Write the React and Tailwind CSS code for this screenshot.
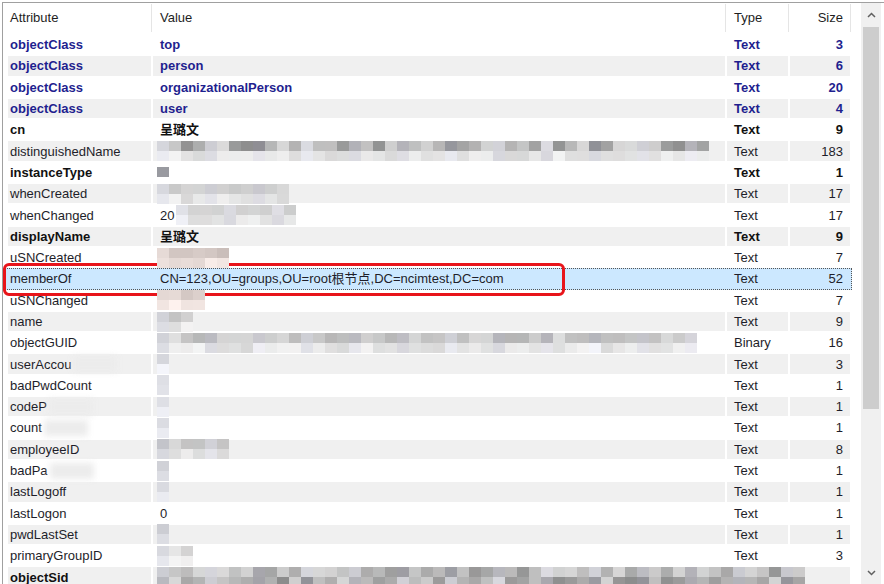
import React from 'react';

const font = { fontFamily: '"Liberation Sans", "Noto Sans CJK SC", Arial, sans-serif' };

// pseudo-random greys for the privacy mosaic
function shade(seed, i, base, spread, tint) {
  const n = Math.abs(Math.sin(seed * 97.13 + i * 12.9898) * 43758.5453) % 1;
  const g = Math.round(base + n * spread);
  const r = Math.min(255, g + (tint === 'pink' ? 12 : (i % 3) - 1));
  const b = Math.min(255, g + (tint === 'pink' ? -4 : (i % 4 === 0 ? 6 : 0)));
  return `rgb(${r},${g},${b})`;
}

const Mosaic = ({ seed, cols, top = 150, topSpread = 70, bottom = 215, bottomSpread = 30, tint, half, after }) => (
  <span className={`relative z-10 inline-flex flex-col shrink-0 ${after ? 'ml-[2px]' : 'ml-[4px]'}`}>
    <span className="flex">
      {Array.from({ length: cols }).map((_, i) => (
        <span key={i} className="block w-[12px] h-[10px]" style={{ background: shade(seed, i, top, topSpread, tint) }} />
      ))}
    </span>
    {!half && (
      <span className="flex">
        {Array.from({ length: cols }).map((_, i) => (
          <span key={i} className="block w-[12px] h-[10px]" style={{ background: shade(seed + 7, i, bottom, bottomSpread, tint) }} />
        ))}
      </span>
    )}
  </span>
);

const rows = [
  { a: 'objectClass', v: 'top', s: '3', kind: 'blue' },
  { a: 'objectClass', v: 'person', s: '6', kind: 'blue' },
  { a: 'objectClass', v: 'organizationalPerson', s: '20', kind: 'blue' },
  { a: 'objectClass', v: 'user', s: '4', kind: 'blue' },
  { a: 'cn', v: '呈璐文', s: '9', kind: 'bold' },
  { a: 'distinguishedName', m: { seed: 1, cols: 46, top: 140, topSpread: 80 }, s: '183' },
  { a: 'instanceType', m: { seed: 2, cols: 1, half: true }, s: '1', kind: 'bold' },
  { a: 'whenCreated', m: { seed: 3, cols: 11, top: 195, topSpread: 25 }, s: '17' },
  { a: 'whenChanged', v: '20', m: { seed: 4, cols: 10, top: 205, topSpread: 25, after: true }, s: '17' },
  { a: 'displayName', v: '呈璐文', s: '9', kind: 'bold' },
  { a: 'uSNCreated', m: { seed: 5, cols: 6, top: 170, topSpread: 50, tint: 'pink' }, s: '7' },
  { a: 'memberOf', v: 'CN=123,OU=groups,OU=root根节点,DC=ncimtest,DC=com', s: '52', selected: true },
  { a: 'uSNChanged', m: { seed: 6, cols: 4, top: 175, topSpread: 45, tint: 'pink' }, s: '7' },
  { a: 'name', m: { seed: 7, cols: 3, top: 185, topSpread: 30 }, s: '9' },
  { a: 'objectGUID', m: { seed: 8, cols: 45, top: 180, topSpread: 45 }, t: 'Binary', s: '16' },
  { a: 'userAccou', cut: true, m: { seed: 9, cols: 1, top: 205, topSpread: 20 }, s: '3' },
  { a: 'badPwdCount', m: { seed: 10, cols: 1, top: 215, topSpread: 15 }, s: '1' },
  { a: 'codeP', cut: true, m: { seed: 11, cols: 1, top: 210, topSpread: 15 }, s: '1' },
  { a: 'count', cut: true, m: { seed: 12, cols: 1, top: 215, topSpread: 15 }, s: '1' },
  { a: 'employeeID', m: { seed: 13, cols: 6, top: 175, topSpread: 45 }, s: '8' },
  { a: 'badPa', cut: true, m: { seed: 14, cols: 1, top: 205, topSpread: 20 }, s: '1' },
  { a: 'lastLogoff', m: { seed: 15, cols: 1, top: 215, topSpread: 15 }, s: '1' },
  { a: 'lastLogon', v: '0', s: '1' },
  { a: 'pwdLastSet', m: { seed: 16, cols: 1, top: 185, topSpread: 20 }, s: '1' },
  { a: 'primaryGroupID', m: { seed: 17, cols: 3, top: 210, topSpread: 20 }, s: '3' },
  { a: 'objectSid', m: { seed: 18, cols: 54, top: 150, topSpread: 70, bottom: 140, bottomSpread: 80 }, s: '', t: '', kind: 'bold' },
];

const Row = ({ r, i }) => {
  const gray = i % 2 === 1 && !r.selected;
  const cell = gray ? 'bg-[#f0f0f0]' : '';
  const text =
    r.kind === 'blue'
      ? 'font-bold text-[#1f1f8f]'
      : r.kind === 'bold'
      ? 'font-bold text-[#111]'
      : 'text-[#1e1e2a]';
  return (
    <div
      className={`flex h-[21.3px] items-stretch text-[13px] leading-none ${
        r.selected ? 'bg-[#cce8ff] outline-1 outline-dotted outline-[#555] -outline-offset-1 ml-[2px] w-[847px] overflow-hidden' : ''
      }`}
    >
      <div className={`${r.selected ? 'w-[147px] pl-[3px]' : 'w-[144px] ml-[5px]'} shrink-0 py-[1px] pr-[1px]`}>
        <div className={`h-full flex items-center pl-[2px] ${cell} ${text}`}>
          {r.a}
          {r.cut && <span className="ml-[2px] w-[44px] h-[16px] bg-[#ececec] blur-[3px]" />}
        </div>
      </div>
      <div className="w-[574px] shrink-0 py-[1px] px-[1px]">
        <div className={`h-full flex items-center overflow-visible whitespace-nowrap ${cell} ${text}`}>
          {r.v && <span className="pl-[7px]">{r.v}</span>}
          {r.m && <Mosaic {...r.m} />}
        </div>
      </div>
      <div className="w-[63px] shrink-0 py-[1px] px-[1px]">
        <div className={`h-full flex items-center pl-[7px] ${cell} ${text}`}>{r.t ?? 'Text'}</div>
      </div>
      <div className="w-[62px] shrink-0 py-[1px] px-[1px]">
        <div className={`h-full flex items-center justify-end pr-[7px] ${cell} ${text}`}>{r.s}</div>
      </div>
    </div>
  );
};

const HeaderCell = ({ label, w, right, first }) => (
  <div className={`${w} h-full flex items-center border-r border-[#e5e5e5] ${right ? 'justify-end pr-[7px]' : first ? 'pl-[7px]' : 'pl-[8px]'}`}>
    {label}
  </div>
);

export default function App() {
  return (
    <div className="w-[884px] h-[584px] overflow-hidden bg-white pt-[2px] pl-[2px]" style={font}>
      <div className="flex h-[600px] border-t border-l border-[#a0a0a0]">
        <div className="relative w-[857px]">
          <div className="flex h-[31px] text-[13px] text-[#1e1e1e] pt-[1px] pb-[2px]">
            <HeaderCell label="Attribute" w="w-[149px]" first />
            <HeaderCell label="Value" w="w-[574px]" />
            <HeaderCell label="Type" w="w-[63px]" />
            <HeaderCell label="Size" w="w-[62px]" right />
          </div>
          {rows.map((r, i) => (
            <Row key={i} r={r} i={i} />
          ))}
          {/* red highlight box */}
          <div className="absolute left-[0px] top-[260px] w-[562px] h-[33px] border-[3px] border-[#e8141a] rounded-[6px] pointer-events-none" />
        </div>
        {/* scrollbar */}
        <div className="w-[24px] h-[582px] flex">
          <div className="w-[20px] ml-[1px] bg-[#f0f0f0] flex flex-col items-center">
            <div className="h-[24px] flex items-center justify-center text-[#606060]">
              <svg width="9" height="6" viewBox="0 0 9 6"><path d="M1 5 L4.5 1.5 L8 5" fill="none" stroke="currentColor" strokeWidth="1.5" /></svg>
            </div>
            <div className="w-[16px] h-[382px] bg-[#cdcdcd]" />
            <div className="flex-1" />
            <div className="h-[24px] flex items-center justify-center text-[#606060]">
              <svg width="9" height="6" viewBox="0 0 9 6"><path d="M1 1 L4.5 4.5 L8 1" fill="none" stroke="currentColor" strokeWidth="1.5" /></svg>
            </div>
          </div>
        </div>
      </div>
    </div>
  );
}
